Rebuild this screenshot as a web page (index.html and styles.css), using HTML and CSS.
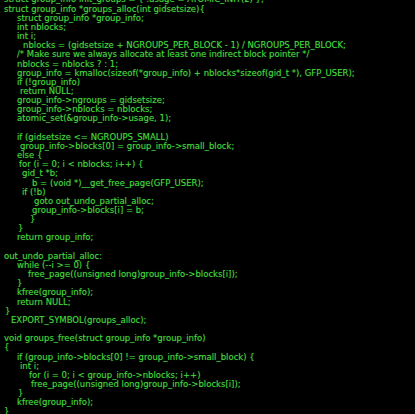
FILE: index.html
```html
<!DOCTYPE html>
<html>
<head>
<meta charset="utf-8">
<link rel="stylesheet" href="styles.css">
</head>
<body>
<div class="code">
<div class="ln x4">struct group_info init_groups = { .usage = ATOMIC_INIT(2) };</div>
<div class="ln x4">struct group_info *groups_alloc(int gidsetsize){</div>
<div class="ln x17">struct group_info *group_info;</div>
<div class="ln x17">int nblocks;</div>
<div class="ln x17">int i;</div>
<div class="ln x23">nblocks = (gidsetsize + NGROUPS_PER_BLOCK - 1) / NGROUPS_PER_BLOCK;</div>
<div class="ln x17">/* Make sure we always allocate at least one indirect block pointer */</div>
<div class="ln x17">nblocks = nblocks ? : 1;</div>
<div class="ln x17">group_info = kmalloc(sizeof(*group_info) + nblocks*sizeof(gid_t *), GFP_USER);</div>
<div class="ln x17">if (!group_info)</div>
<div class="ln x20">return NULL;</div>
<div class="ln x17">group_info-&gt;ngroups = gidsetsize;</div>
<div class="ln x17">group_info-&gt;nblocks = nblocks;</div>
<div class="ln x17">atomic_set(&amp;group_info-&gt;usage, 1);</div>
<div class="ln blank"></div>
<div class="ln x17">if (gidsetsize &lt;= NGROUPS_SMALL)</div>
<div class="ln x20">group_info-&gt;blocks[0] = group_info-&gt;small_block;</div>
<div class="ln x17">else {</div>
<div class="ln x19">for (i = 0; i &lt; nblocks; i++) {</div>
<div class="ln x22">gid_t *b;</div>
<div class="ln x32">b = (void *)__get_free_page(GFP_USER);</div>
<div class="ln x22">if (!b)</div>
<div class="ln x34">goto out_undo_partial_alloc;</div>
<div class="ln x32">group_info-&gt;blocks[i] = b;</div>
<div class="ln x30">}</div>
<div class="ln x18">}</div>
<div class="ln x17">return group_info;</div>
<div class="ln blank"></div>
<div class="ln x4">out_undo_partial_alloc:</div>
<div class="ln x17">while (--i &gt;= 0) {</div>
<div class="ln x28">free_page((unsigned long)group_info-&gt;blocks[i]);</div>
<div class="ln x17">}</div>
<div class="ln x17">kfree(group_info);</div>
<div class="ln x17">return NULL;</div>
<div class="ln x5">}</div>
<div class="ln x11">EXPORT_SYMBOL(groups_alloc);</div>
<div class="ln blank"></div>
<div class="ln x4">void groups_free(struct group_info *group_info)</div>
<div class="ln x4">{</div>
<div class="ln x17">if (group_info-&gt;blocks[0] != group_info-&gt;small_block) {</div>
<div class="ln x20">int i;</div>
<div class="ln x29">for (i = 0; i &lt; group_info-&gt;nblocks; i++)</div>
<div class="ln x31">free_page((unsigned long)group_info-&gt;blocks[i]);</div>
<div class="ln x18">}</div>
<div class="ln x17">kfree(group_info);</div>
<div class="ln x4">}</div>
</div>
</body>
</html>
```

FILE: styles.css
```css
html, body {
  margin: 0;
  padding: 0;
  background: #000;
  overflow: hidden;
}
.code {
  margin-top: -4.6px;
  font-family: "DejaVu Sans", sans-serif;
  font-size: 8.5px;
  line-height: 9.17px;
  color: #44d83e;
  text-shadow: 0 0 1px rgba(60, 220, 60, 0.45);
}
.ln {
  height: 9.17px;
  white-space: pre;
}
.x4 { padding-left: 4px; }
.x5 { padding-left: 5px; }
.x11 { padding-left: 11px; }
.x17 { padding-left: 17px; }
.x18 { padding-left: 18px; }
.x19 { padding-left: 19px; }
.x20 { padding-left: 20px; }
.x22 { padding-left: 22px; }
.x23 { padding-left: 23px; }
.x28 { padding-left: 28px; }
.x29 { padding-left: 29px; }
.x30 { padding-left: 30px; }
.x31 { padding-left: 31px; }
.x32 { padding-left: 32px; }
.x34 { padding-left: 34px; }
```
